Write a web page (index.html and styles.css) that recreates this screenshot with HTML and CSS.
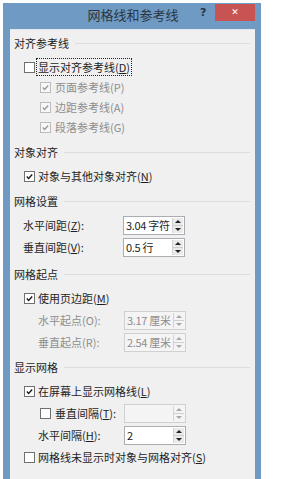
FILE: index.html
```html
<html>
<head>
    <meta charset="UTF-8">
    <title>网格线和参考线</title>
    <link rel="stylesheet" href="styles.css">
</head>
<body>
    <div class="dialog">
        <div class="titlebar">
            <span class="title">网格线和参考线</span>
            <span class="help">?</span>
            <span class="close">&#x2715;</span>
        </div>

        <div class="panel">
            <!-- 对齐参考线 -->
            <div class="group g1">
                <div class="legend"><span>对齐参考线</span></div>
                <div class="row ind1">
                    <span class="box"></span>
                    <span class="focus">显示对齐参考线(<u>D</u>)</span>
                </div>
                <div class="row ind2 off">
                    <span class="box on"><svg viewBox="0 0 11 11"><polyline points="2.2,5.6 4.4,7.8 8.8,3" /></svg></span>
                    <span>页面参考线(P)</span>
                </div>
                <div class="row ind2 off">
                    <span class="box on"><svg viewBox="0 0 11 11"><polyline points="2.2,5.6 4.4,7.8 8.8,3" /></svg></span>
                    <span>边距参考线(A)</span>
                </div>
                <div class="row ind2 off">
                    <span class="box on"><svg viewBox="0 0 11 11"><polyline points="2.2,5.6 4.4,7.8 8.8,3" /></svg></span>
                    <span>段落参考线(G)</span>
                </div>
            </div>

            <!-- 对象对齐 -->
            <div class="group g2">
                <div class="legend"><span>对象对齐</span></div>
                <div class="row ind1">
                    <span class="box on"><svg viewBox="0 0 11 11"><polyline points="2.2,5.6 4.4,7.8 8.8,3" /></svg></span>
                    <span>对象与其他对象对齐(<u>N</u>)</span>
                </div>
            </div>

            <!-- 网格设置 -->
            <div class="group g3">
                <div class="legend"><span>网格设置</span></div>
                <div class="row field">
                    <span class="lbl">水平间距(<u>Z</u>):</span>
                    <div class="spin"><span class="val">3.04 字符</span><span class="btns"><i class="up"></i><i class="dn"></i></span></div>
                </div>
                <div class="row field">
                    <span class="lbl">垂直间距(<u>V</u>):</span>
                    <div class="spin"><span class="val">0.5 行</span><span class="btns"><i class="up"></i><i class="dn"></i></span></div>
                </div>
            </div>

            <!-- 网格起点 -->
            <div class="group g4">
                <div class="legend"><span>网格起点</span></div>
                <div class="row ind1">
                    <span class="box on"><svg viewBox="0 0 11 11"><polyline points="2.2,5.6 4.4,7.8 8.8,3" /></svg></span>
                    <span>使用页边距(<u>M</u>)</span>
                </div>
                <div class="row field sub off">
                    <span class="lbl">水平起点(O):</span>
                    <div class="spin"><span class="val">3.17 厘米</span><span class="btns"><i class="up"></i><i class="dn"></i></span></div>
                </div>
                <div class="row field sub off">
                    <span class="lbl">垂直起点(R):</span>
                    <div class="spin"><span class="val">2.54 厘米</span><span class="btns"><i class="up"></i><i class="dn"></i></span></div>
                </div>
            </div>

            <!-- 显示网格 -->
            <div class="group g5">
                <div class="legend"><span>显示网格</span></div>
                <div class="row ind1">
                    <span class="box on"><svg viewBox="0 0 11 11"><polyline points="2.2,5.6 4.4,7.8 8.8,3" /></svg></span>
                    <span>在屏幕上显示网格线(<u>L</u>)</span>
                </div>
                <div class="row field sub">
                    <span class="lbl"><span class="box"></span>垂直间隔(<u>T</u>):</span>
                    <div class="spin dis"><span class="val"></span><span class="btns"><i class="up"></i><i class="dn"></i></span></div>
                </div>
                <div class="row field sub">
                    <span class="lbl">水平间隔(<u>H</u>):</span>
                    <div class="spin"><span class="val">2</span><span class="btns"><i class="up"></i><i class="dn"></i></span></div>
                </div>
                <div class="row ind1">
                    <span class="box"></span>
                    <span>网格线未显示时对象与网格对齐(<u>S</u>)</span>
                </div>
            </div>
        </div>
    </div>
</body>
</html>
```
FILE: styles.css
```css
body {
    margin: 0;
    background: #ffffff;
    font-family: "Noto Sans CJK SC", "Noto Sans", sans-serif;
    font-size: 11px;
    color: #1e1e1e;
    overflow: hidden;
}

.dialog {
    margin: 3px 0 0 3px;
    width: 258px;
    height: 490px;
    background: #6e9ac3;
    display: flex;
    flex-direction: column;
}

.titlebar {
    height: 26px;
    display: flex;
    align-items: flex-start;
    position: relative;
}

.title {
    flex: 1;
    text-align: center;
    font-size: 13px;
    line-height: 24px;
    color: #2c3540;
    padding-left: 2px;
}

.help {
    position: absolute;
    left: 197px;
    top: 3px;
    font-family: "DejaVu Sans", sans-serif;
    font-weight: bold;
    font-size: 11px;
    color: #2a3440;
}

.close {
    position: absolute;
    left: 212px;
    top: 1px;
    width: 40px;
    height: 17px;
    background: #c75452;
    color: #ffffff;
    font-family: "DejaVu Sans", sans-serif;
    font-size: 9px;
    font-weight: bold;
    text-align: center;
    line-height: 17px;
}

.panel {
    flex: 1;
    margin: 0 6px 0 7px;
    background: #f0f0f0;
    border-top: 1px solid #dfe7ef;
    padding: 3px 5px 0 4px;
}

.group + .group {
    margin-top: 5px;
}

.g4 {
    margin-top: 7px !important;
}

.g5 {
    margin-top: 5px !important;
}

.legend {
    height: 20px;
    display: flex;
    align-items: center;
    margin-bottom: 4px;
    color: #1e1e1e;
}

.legend::after {
    content: "";
    flex: 1;
    height: 1px;
    background: #dcdcdc;
    margin-left: 6px;
}

.row {
    height: 20px;
    display: flex;
    align-items: center;
}

.g3 .row + .row,
.g4 .row + .row,
.g5 .row + .row {
    margin-top: 2px;
}

.ind1 {
    padding-left: 10px;
}

.ind2 {
    padding-left: 26px;
}

.box {
    width: 11px;
    height: 11px;
    box-sizing: border-box;
    border: 1px solid #707070;
    background: #ffffff;
    margin-right: 3px;
    display: inline-flex;
    flex: none;
}

.box svg {
    width: 9px;
    height: 9px;
}

.box polyline {
    fill: none;
    stroke: #1a1a1a;
    stroke-width: 1.7;
}

.ind2 .box {
    margin-right: 4px;
}

.off {
    color: #8d8d8d;
}

.off .box {
    border-color: #bcbcbc;
    background: #f7f7f7;
}

.off .box polyline {
    stroke: #9a9a9a;
}

.focus {
    outline: 1px dotted #222;
    padding: 0 1px;
    margin-left: -1px;
}

u {
    text-decoration: underline;
    text-underline-offset: 1px;
}

/* 数值输入框 */
.field {
    padding-left: 9px;
}

.field.sub {
    padding-left: 24px;
}

.lbl {
    width: 100px;
    display: flex;
    align-items: center;
}

.field.sub .lbl {
    width: 86px;
}

.lbl .box {
    margin-left: 2px;
    margin-right: 4px;
}

.spin {
    width: 62px;
    height: 19px;
    box-sizing: border-box;
    border: 1px solid #abadb3;
    background: #ffffff;
    display: flex;
    align-items: stretch;
    color: #1e1e1e;
}

.spin .val {
    flex: 1;
    min-width: 0;
    padding-left: 2px;
    line-height: 17px;
    font-size: 11px;
    letter-spacing: -0.3px;
    white-space: nowrap;
}

.spin .btns {
    width: 10px;
    flex: none;
    display: flex;
    flex-direction: column;
    border-left: 1px solid #d4d4d4;
    margin: 1px 1px 1px 0;
}

.spin i {
    flex: 1;
    display: flex;
    align-items: center;
    justify-content: center;
    background: #eaeaea;
}

.spin i + i {
    border-top: 1px solid #cfcfcf;
}

.spin i::before {
    content: "";
    border-left: 3px solid transparent;
    border-right: 3px solid transparent;
}

.spin .up::before {
    border-bottom: 3px solid #222;
}

.spin .dn::before {
    border-top: 3px solid #222;
}

.off .spin,
.spin.dis {
    border-color: #d0d0d0;
    background: #f4f4f4;
    color: #8d8d8d;
}

.off .spin i,
.spin.dis i {
    background: #f4f4f4;
}

.off .spin .up::before,
.spin.dis .up::before {
    border-bottom-color: #a8a8a8;
}

.off .spin .dn::before,
.spin.dis .dn::before {
    border-top-color: #a8a8a8;
}
```
